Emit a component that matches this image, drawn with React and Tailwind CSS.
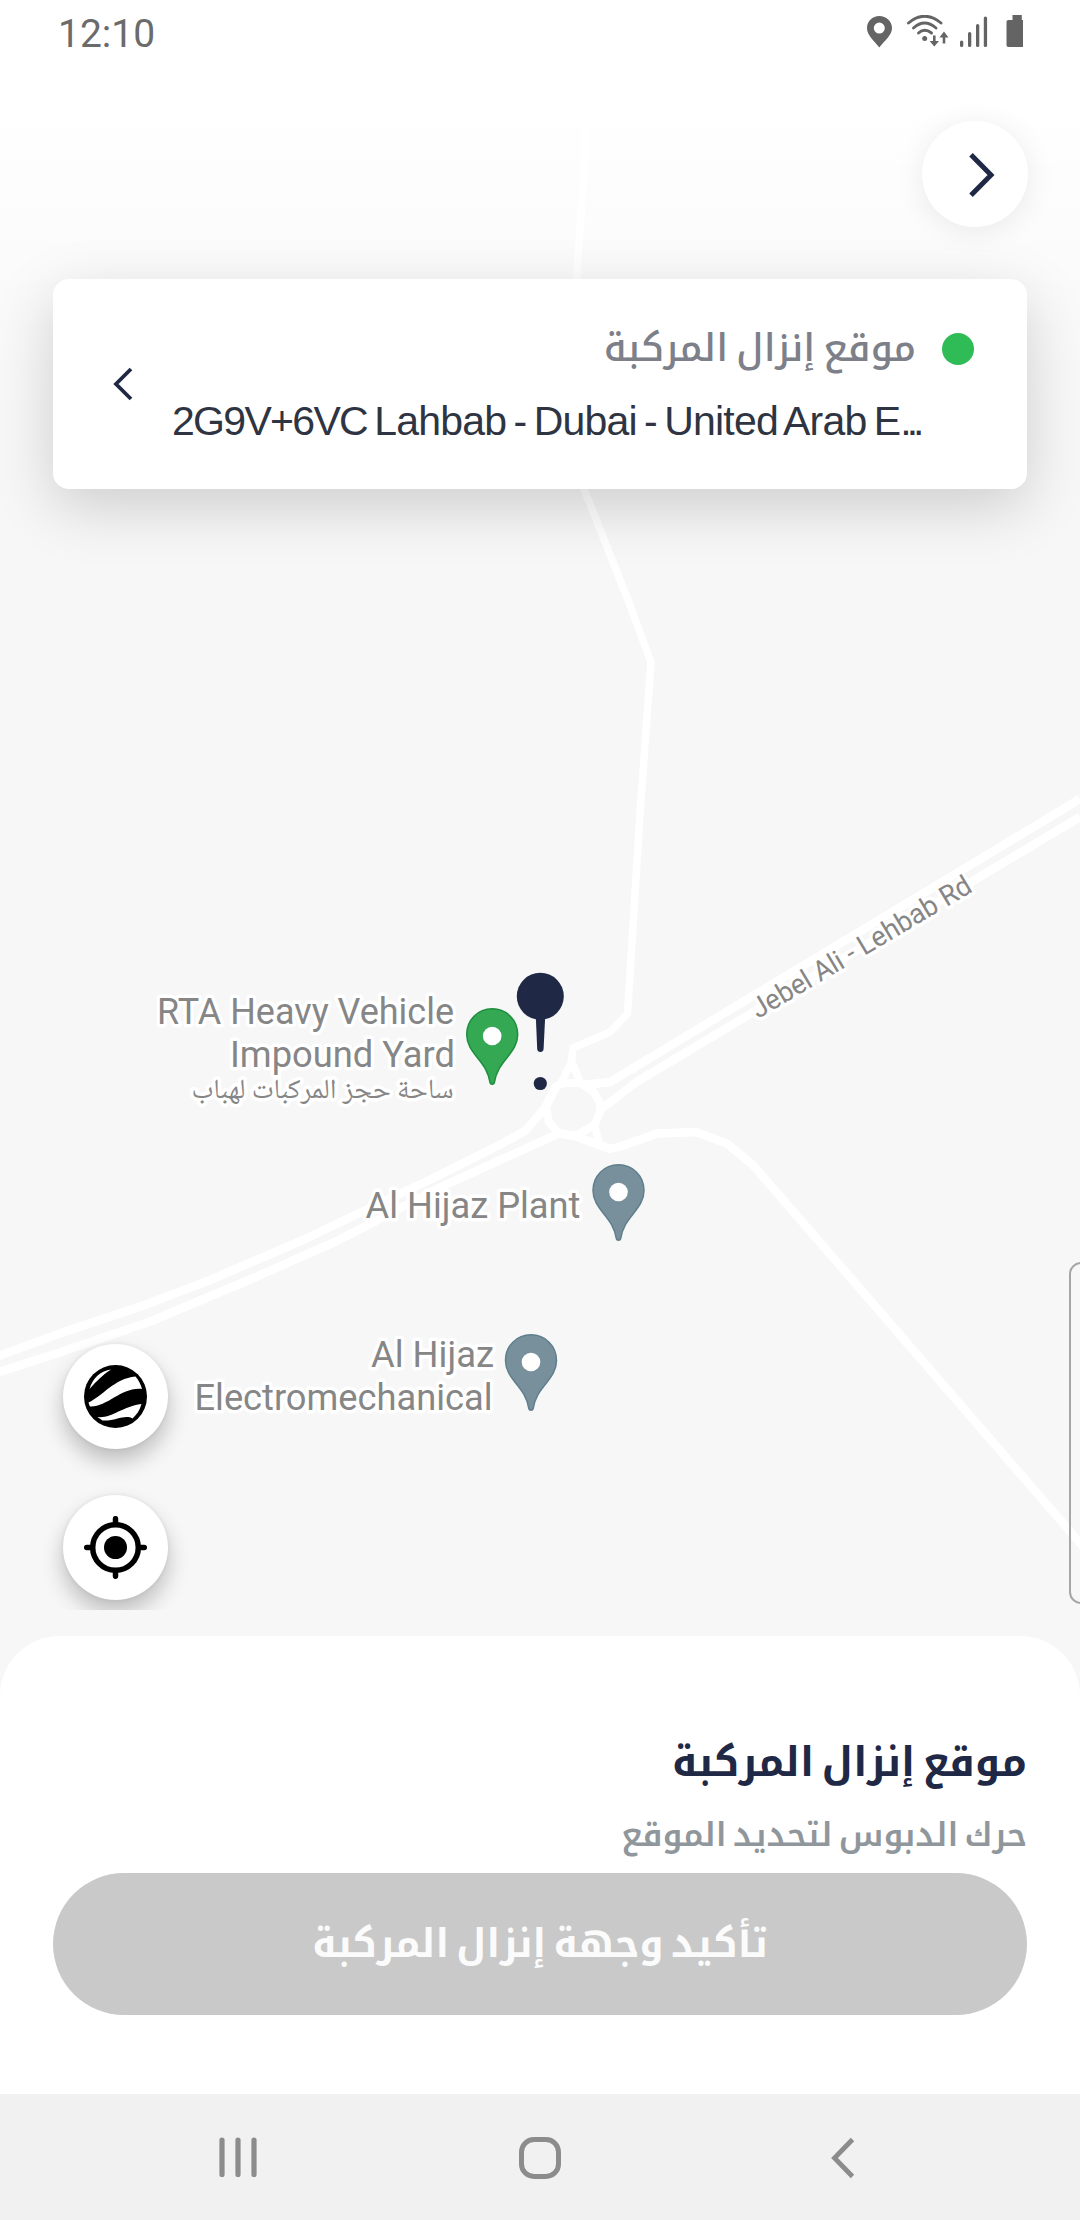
const INK = "#1f2945";

function Road({ d, w = 7.5 }) {
  return <path d={d} fill="none" stroke="#ffffff" strokeWidth={w} strokeLinejoin="round" strokeLinecap="butt" />;
}

function PlacePin({ x, y, fill, edge }) {
  return (
    <g transform={`translate(${x} ${y})`}>
      <path
        d="M0 .8C14.300 .8 25.500 12 25.500 26.500C25.500 36 20.500 42.500 15 49.500C8.500 57.500 4 63.500 2.200 74.500C1.700 76.800 -1.700 76.800 -2.200 74.500C-4 63.500 -8.500 57.500 -15 49.500C-20.500 42.500 -25.500 36 -25.500 26.500C-25.500 12 -14.300 .8 0 .8Z"
        fill={fill}
        stroke={edge}
        strokeWidth="1.500"
      />
      <circle cx="0" cy="28" r="9.300" fill="#fff" />
    </g>
  );
}

function Label({ x, y, w, size = 37.5, children, anchor = "end", family = "Roboto, sans-serif", ...rest }) {
  return (
    <text
      x={x}
      y={y}
      textAnchor={anchor}
      textLength={w}
      lengthAdjust="spacingAndGlyphs"
      fontFamily={family}
      fontSize={size}
      fill="#868686"
      stroke="#ffffff"
      strokeWidth="7"
      strokeLinejoin="round"
      paintOrder="stroke"
      {...rest}
    >
      {children}
    </text>
  );
}

function MapCanvas() {
  return (
    <svg className="absolute inset-0" width="1080" height="1700" viewBox="0 0 1080 1700">
      <rect width="1080" height="1700" fill="#f7f7f7" />
      <Road d="M588 100L582 200L577 270L578 440L584 489L628 600L651 662L640 814L627.500 1014L610 1032L573 1048L571 1063L561 1083" />
      <Road d="M571 1060L581 1084" />
      <Road d="M555 1087L563 1083L580 1083L593 1091L600 1103L600 1112L594.500 1125L575 1136L558 1133L549 1122L546 1107L555 1087Z" w={8} />
      <Road d="M583 1085L610 1082L1080 799" w={8.5} />
      <Road d="M600 1110L636.500 1082L1080 817" w={8.5} />
      <Road d="M557 1085L545 1108L525 1131L505 1142L440 1175L393 1197L303 1240L210 1280L145 1305L61 1333L-4 1357" w={8.5} />
      <Road d="M562 1132L441 1187L337 1241L249 1280L149 1322L61 1352L-4 1373" w={8.5} />
      <Road d="M558 1133L575 1136L610 1149L622 1146L657 1133.500L696 1132L727 1143.500L753 1165L1084 1547.500" w={8.5} />
      <Road d="M594 1123L599 1143" />

      <Label x={758} y={1019} w={251} size={28} anchor="start" transform="rotate(-30.700 758 1019)">
        Jebel Ali - Lehbab Rd
      </Label>
      <Label x={454} y={1024} w={297}>RTA Heavy Vehicle</Label>
      <Label x={455} y={1067} w={225}>Impound Yard</Label>
      <Label x={453.500} y={1098} w={262} size={27.500} anchor="start" direction="rtl" family="'Noto Naskh Arabic', 'DejaVu Sans', sans-serif">
        ساحة حجز المركبات لهباب
      </Label>
      <Label x={580.500} y={1218} w={215}>Al Hijaz Plant</Label>
      <Label x={494} y={1367} w={123}>Al Hijaz</Label>
      <Label x={492.500} y={1410} w={298}>Electromechanical</Label>

      <PlacePin x={492.200} y={1008} fill="#34a853" edge="#1e8e3e" />
      <PlacePin x={618.500} y={1164} fill="#78909c" edge="#5f7f8c" />
      <PlacePin x={531} y={1334} fill="#78909c" edge="#5f7f8c" />

      <g fill={INK}>
        <circle cx="540.300" cy="996.300" r="23.500" />
        <path d="M535.800 1016H545.200L543.600 1049Q543.300 1052 540.400 1052Q537.500 1052 537.200 1049Z" />
        <circle cx="540.300" cy="1083.500" r="6.600" />
      </g>
    </svg>
  );
}

function StatusBar() {
  return (
    <div className="relative flex h-[66px] items-center justify-between pr-[57px] pl-[58px]">
      <span className="pt-0.5 text-[39px] leading-none text-[#6b6b6b]" style={{ fontFamily: "Roboto, sans-serif" }}>12:10</span>
      <svg width="158" height="36" viewBox="0 0 158 36" fill="#646464">
        <path fillRule="evenodd" d="M14.300 1C7.400 1 2 6.300 2 13C2 20.500 9 25.500 14.300 32.500C19.600 25.500 27 20.500 27 13C27 6.300 21.200 1 14.300 1ZM14.300 7.600A5.500 5.500 0 1 1 14.300 18.600A5.500 5.500 0 1 1 14.300 7.600Z" />
        <g fill="none" stroke="#646464" strokeWidth="2.900" strokeLinecap="round">
          <path d="M43.500 8Q59.500 -5.500 76 8" />
          <path d="M48.500 13Q59.500 3 71 13" />
          <path d="M53.500 18Q59.500 12.500 66.500 18" />
        </g>
        <circle cx="59.700" cy="23.500" r="2.500" />
        <path d="M68 20.500H70.600V26H74L69.300 31.500L64.600 26H68Z" />
        <path d="M77.700 28.500H80.300V22.500H83.500L79 16.500L74.400 22.500H77.700Z" />
        <rect x="95" y="25.500" width="3.300" height="6.500" rx="1.600" />
        <rect x="103" y="17" width="3.300" height="15" rx="1.600" />
        <rect x="111" y="9" width="3.300" height="23" rx="1.600" />
        <rect x="118.800" y="1.500" width="3.300" height="30.500" rx="1.600" />
        <path d="M142 0H151.300V5H155.200Q157 5 157 6.800V30.200Q157 32 155.200 32H137.800Q136 32 136 30.200V6.800Q136 5 137.800 5H142Z" transform="translate(5.500 0)" />
      </svg>
    </div>
  );
}

function BackButton() {
  return (
    <button className="ml-[922px] flex size-[106px] items-center justify-center rounded-full bg-white shadow-[0_4px_30px_rgba(0,0,0,0.08)]">
      <svg className="ml-3.5" width="30" height="48" viewBox="0 0 30 48" fill="none" stroke={INK} strokeWidth="5">
        <path d="M4 4.800L24 25L4 45.200" />
      </svg>
    </button>
  );
}

function DestinationCard() {
  return (
    <div dir="rtl" className="flex h-[210px] w-[974px] items-center rounded-2xl bg-white pr-[53px] pl-[60px] shadow-[0_18px_60px_rgba(0,0,0,0.17)]">
      <div className="flex h-full w-8 shrink-0 pt-[54px]">
        <span className="size-8 rounded-full bg-[#2fbc56]" />
      </div>
      <div className="mr-[26px] flex h-full w-[744px] shrink-0 flex-col pt-[41px]">
        <span className="h-[66px] text-[38.5px] leading-[57px] font-medium [word-spacing:-5px] whitespace-nowrap text-[#7d7f89]" style={{ fontFamily: "'Noto Kufi Arabic', 'DejaVu Sans', sans-serif" }}>
          موقع إنزال المركبة
        </span>
        <span dir="ltr" className="pr-1 text-right text-[41px] leading-[70px] tracking-[-0.8px] [word-spacing:-3.3px] whitespace-nowrap text-[#2f3442]" style={{ fontFamily: "'Liberation Sans', sans-serif" }}>
          <span className="tracking-[-1.7px]">2G9V+6VC</span> Lahbab - Dubai - United Arab E<span className="tracking-[-5px]">...</span>
        </span>
      </div>
      <svg className="mr-auto shrink-0" width="20" height="34" viewBox="0 0 20 34" fill="none" stroke={INK} strokeWidth="3.800">
        <path d="M18 2L3 17L18 32" />
      </svg>
    </div>
  );
}

function MapButton({ children }) {
  return (
    <button className="flex size-[105px] items-center justify-center rounded-full bg-white shadow-[0_12px_22px_rgba(0,0,0,0.24),0_0_4px_rgba(0,0,0,0.08)]">
      {children}
    </button>
  );
}

function MapControls() {
  return (
    <div className="absolute top-[1310px] left-0 flex h-[300px] w-[240px] flex-col gap-[46px] overflow-hidden pt-[34px] pl-[63px]">
      <MapButton>
        <svg width="63" height="63" viewBox="0 0 63 63">
          <circle cx="31.500" cy="31.500" r="31.500" fill="#000" />
          <g fill="#fff">
            <path d="M5.500 24C8.500 13 17 5.500 27 4.500C19 9.500 12.500 16 5.500 24Z" />
            <path d="M4.500 37.500C19 31 30 13.500 51.500 11.500C54.500 15 57 19.500 58 24C38 21.500 23 42.500 6 41.500Q5 39.500 4.500 37.500Z" />
            <path d="M13.500 52C28 53.500 37 42 57.500 39C56 45 52.500 50 48.500 53.500C41 49 31 56.500 18.500 55.500Z" />
          </g>
        </svg>
      </MapButton>
      <MapButton>
        <svg width="63" height="63" viewBox="0 0 63 63" fill="none" stroke="#000" strokeWidth="5.500" strokeLinecap="round">
          <circle cx="31.500" cy="31.500" r="22.800" />
          <circle cx="31.500" cy="31.500" r="11.500" fill="#000" stroke="none" />
          <path d="M31.500 2.700V8M31.500 55V60.300M2.700 31.500H8M55 31.500H60.300" />
        </svg>
      </MapButton>
    </div>
  );
}

function BottomSheet() {
  return (
    <section dir="rtl" className="relative flex h-[458px] flex-col rounded-t-[60px] bg-white px-[53px] pt-[88px] text-right" style={{ fontFamily: "'Noto Kufi Arabic', 'DejaVu Sans', sans-serif" }}>
      <h1 className="h-[76px] text-[40.5px] leading-[78px] font-bold [word-spacing:-6px] text-[#1f2945]">موقع إنزال المركبة</h1>
      <p className="h-[73px] text-[33px] leading-[70px] font-semibold [word-spacing:-5px] text-[#90979c]">حرك الدبوس لتحديد الموقع</p>
      <button className="flex h-[142px] items-center justify-center rounded-full bg-[#c9c9c9] text-[39px] font-bold [word-spacing:-6px] text-[#fbfbfb]">تأكيد وجهة إنزال المركبة</button>
    </section>
  );
}

function NavBar() {
  return (
    <nav className="flex h-[126px] items-center bg-[#f1f1f1]">
      <svg className="ml-[219px]" width="38" height="44" viewBox="0 0 38 44" fill="none" stroke="#8c8c8c" strokeWidth="5.200" strokeLinecap="round">
        <path d="M3 5V39.500M19 5V39.500M35 5V39.500" />
      </svg>
      <svg className="ml-[261px]" width="44" height="44" viewBox="0 0 44 44" fill="none" stroke="#8c8c8c" strokeWidth="5">
        <rect x="3.500" y="4.500" width="37" height="37" rx="12.500" />
      </svg>
      <svg className="ml-[268px]" width="26" height="44" viewBox="0 0 26 44" fill="none" stroke="#8c8c8c" strokeWidth="4.800">
        <path d="M22.500 4.500L4.500 23L22.500 41.500" />
      </svg>
    </nav>
  );
}

export default function App() {
  return (
    <div className="relative flex h-[2220px] w-[1080px] flex-col overflow-hidden bg-[#f7f7f7]">
      <MapCanvas />
      <div className="absolute inset-x-0 top-0 h-[420px] bg-linear-to-b from-white from-25% to-white/0" />
      <header className="relative flex h-[1636px] flex-col">
        <StatusBar />
        <div className="mt-[55px]">
          <BackButton />
        </div>
        <div className="mt-[52px] ml-[53px]">
          <DestinationCard />
        </div>
      </header>
      <MapControls />
      <div className="absolute top-[1262px] left-[1069px] h-[342px] w-6 rounded-[12px] border-2 border-[#a6a6a6]" />
      <BottomSheet />
      <NavBar />
    </div>
  );
}
